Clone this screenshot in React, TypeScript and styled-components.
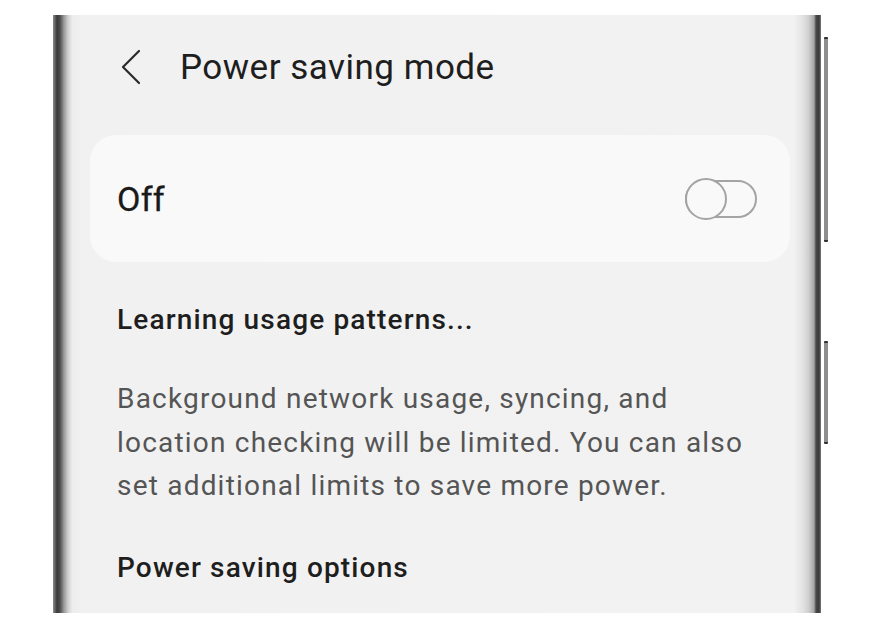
import styled, { createGlobalStyle } from "styled-components"

const GlobalStyle = createGlobalStyle`
  html, body {
    margin: 0;
    padding: 0;
    background: #ffffff;
  }
  body {
    font-family: Roboto, "Noto Sans", "Liberation Sans", sans-serif;
    -webkit-font-smoothing: antialiased;
  }
`

const Page = styled.div`
  width: 872px;
  height: 636px;
  overflow: hidden;
  padding: 15px 0 0 53px;
  box-sizing: border-box;
`

const Phone = styled.div`
  position: relative;
  display: flex;
  width: 768px;
  height: 598px;
`

const LeftRim = styled.div`
  width: 19px;
  flex-shrink: 0;
  background: linear-gradient(
    to right,
    #8c8c8c 0px,
    #3a3a3a 4px,
    #4e4e4e 7px,
    #9a9a9a 11px,
    #cfcfcf 15px,
    #ebebeb 19px
  );
`

const RightRim = styled.div`
  width: 26px;
  flex-shrink: 0;
  background: linear-gradient(
    to right,
    #f0f0f0 0px,
    #e2e2e2 8px,
    #cdcdcd 14px,
    #a6a6a6 19px,
    #4a4a4a 21px,
    #3a3a3a 24px,
    #7a7a7a 26px
  );
`

const SideKey = styled.div<{ $top: number; $height: number }>`
  position: absolute;
  right: -7px;
  top: ${p => p.$top}px;
  width: 4px;
  height: ${p => p.$height}px;
  background: #8e8e8e;
  border-top: 2px solid #333;
  border-bottom: 2px solid #333;
  border-radius: 1px;
`

const Screen = styled.div`
  flex: 1;
  display: flex;
  flex-direction: column;
  background: linear-gradient(to right, #ececec 0px, #f1f1f1 10px, #f2f2f2 100%);
`

const Header = styled.div`
  height: 104px;
  display: flex;
  align-items: center;
  padding-left: 48px;
  gap: 38px;
`

const Title = styled.h1`
  margin: 0;
  font-size: 35px;
  font-weight: 400;
  color: #1e1e1e;
  line-height: 1;
  letter-spacing: 0.5px;
`

const Card = styled.div`
  margin: 16px 5px 0 18px;
  height: 127px;
  border-radius: 26px;
  background: #f9f9f9;
  display: flex;
  align-items: center;
  justify-content: space-between;
  padding: 0 33px 0 27px;
`

const SwitchLabel = styled.span`
  font-size: 34px;
  font-weight: 400;
  color: #1a1a1a;
  line-height: 1;
  letter-spacing: 0.3px;
  -webkit-text-stroke: 0.3px #1a1a1a;
`

const Track = styled.div`
  position: relative;
  width: 72px;
  height: 38px;
  box-sizing: border-box;
  border: 2px solid #a4a4a4;
  border-radius: 19px;
`

const Knob = styled.div`
  position: absolute;
  left: -2px;
  top: -4px;
  width: 42px;
  height: 42px;
  box-sizing: border-box;
  border: 2px solid #a4a4a4;
  border-radius: 50%;
  background: #f9f9f9;
`

const Section = styled.div`
  padding: 0 0 0 45px;
  display: flex;
  flex-direction: column;
`

const SectionTitle = styled.div<{ $top: number }>`
  margin-top: ${p => p.$top}px;
  font-size: 28px;
  font-weight: 500;
  color: #1e1e1e;
  line-height: 32px;
  letter-spacing: 1.15px;
`

const Body = styled.p`
  margin: 41px 0 0;
  font-size: 28px;
  font-weight: 400;
  color: #555555;
  line-height: 43.5px;
  letter-spacing: 1.2px;
`

const Chevron = () => (
  <svg width="22" height="36" viewBox="0 0 22 36" fill="none">
    <path d="M19 2 L3 18 L19 34" stroke="#2a2a2a" strokeWidth="2.2" strokeLinecap="round" strokeLinejoin="round" />
  </svg>
)

export default function App() {
  return (
    <Page>
      <GlobalStyle />
      <Phone>
        <LeftRim />
        <Screen>
          <Header>
            <Chevron />
            <Title>Power saving mode</Title>
          </Header>
          <Card>
            <SwitchLabel>Off</SwitchLabel>
            <Track>
              <Knob />
            </Track>
          </Card>
          <Section>
            <SectionTitle $top={42}>Learning usage patterns...</SectionTitle>
            <Body>
              Background network usage, syncing, and
              <br />
              location checking will be limited. You can also
              <br />
              set additional limits to save more power.
            </Body>
            <SectionTitle $top={44}>Power saving options</SectionTitle>
          </Section>
        </Screen>
        <RightRim />
        <SideKey $top={22} $height={201} />
        <SideKey $top={326} $height={99} />
      </Phone>
    </Page>
  )
}
